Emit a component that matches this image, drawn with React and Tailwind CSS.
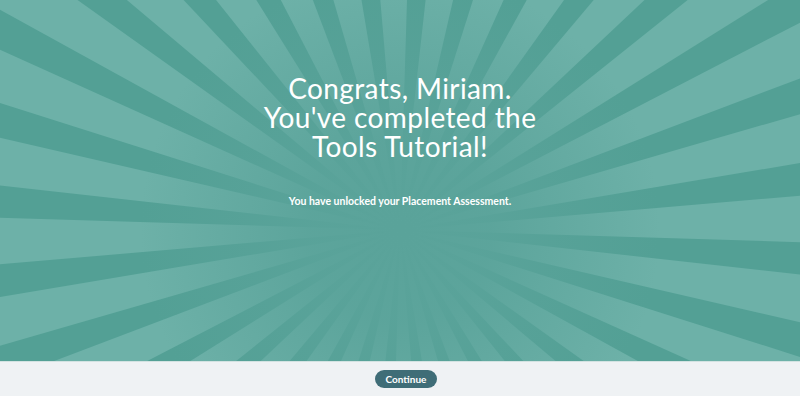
// App.jsx
const RAYS = 32;
const CX = 400;
const CY = 230;
const R = 1200;

function wedge(startDeg, widthDeg) {
  // degrees measured clockwise from straight up
  const a0 = ((startDeg - 90) * Math.PI) / 180;
  const a1 = ((startDeg + widthDeg - 90) * Math.PI) / 180;
  const x0 = CX + R * Math.cos(a0);
  const y0 = CY + R * Math.sin(a0);
  const x1 = CX + R * Math.cos(a1);
  const y1 = CY + R * Math.sin(a1);
  return `M${CX} ${CY} L${x0.toFixed(1)} ${y0.toFixed(1)} L${x1.toFixed(1)} ${y1.toFixed(1)} Z`;
}

function Sunburst() {
  const period = 360 / RAYS;
  const dark = 4.6;
  const rays = Array.from({ length: RAYS }, (_, i) => -7.2 + i * period - dark / 2);

  return (
    <svg className="absolute inset-0 w-full h-full" viewBox="0 0 800 361" preserveAspectRatio="none">
      <defs>
        <radialGradient id="glow" cx={CX} cy={CY} r="260" gradientUnits="userSpaceOnUse">
          <stop offset="0" stopColor="#5aa39a" stopOpacity="1" />
          <stop offset="0.35" stopColor="#5aa39a" stopOpacity="0.9" />
          <stop offset="1" stopColor="#5aa39a" stopOpacity="0" />
        </radialGradient>
      </defs>
      <rect width="800" height="361" fill="#6db1a8" />
      {rays.map((a, i) => (
        <path key={i} d={wedge(a, dark)} fill="#53a095" />
      ))}
      <rect width="800" height="361" fill="url(#glow)" />
    </svg>
  );
}

export default function App() {
  return (
    <div className="w-[800px] h-[396px] flex flex-col bg-[#eff2f4] font-['Lato',sans-serif]">
      {/* Celebration panel */}
      <div className="relative h-[361px] overflow-hidden">
        <Sunburst />
        <div className="relative flex flex-col items-center pt-[74px]">
          <h1 className="text-white text-[28px] leading-[29px] font-normal text-center tracking-[0.4px]">
            Congrats, Miriam.
            <br />
            You've completed the
            <br />
            Tools Tutorial!
          </h1>
          <p className="mt-[33px] text-white text-[10.5px] font-bold">
            You have unlocked your Placement Assessment.
          </p>
        </div>
      </div>

      {/* Footer */}
      <div className="flex-1 flex items-center justify-center border-t border-[#d3e3e2] pl-[12px]">
        <button className="h-[18px] w-[62px] rounded-full bg-[#3f6d77] text-white text-[10px] font-bold leading-none">
          Continue
        </button>
      </div>
    </div>
  );
}
